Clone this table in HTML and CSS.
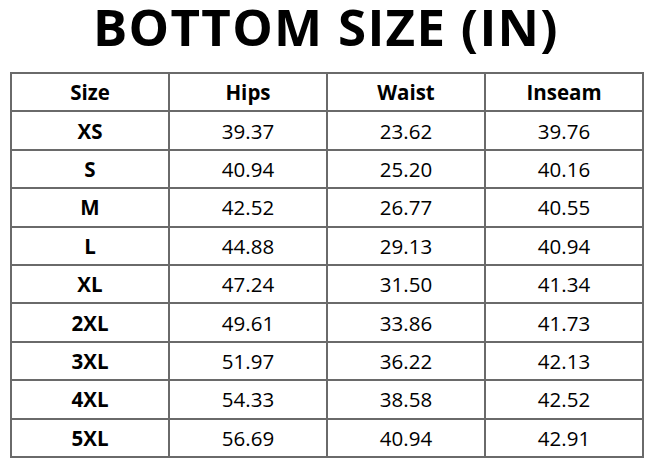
FILE: index.html
```html
<!DOCTYPE html>
<html>
<head>
<meta charset="utf-8">
<link rel="stylesheet" href="styles.css">
</head>
<body>
<h1 class="title">BOTTOM SIZE (IN)</h1>
<table class="chart">
  <thead>
    <tr><th>Size</th><th>Hips</th><th>Waist</th><th>Inseam</th></tr>
  </thead>
  <tbody>
    <tr><th>XS</th><td>39.37</td><td>23.62</td><td>39.76</td></tr>
    <tr><th>S</th><td>40.94</td><td>25.20</td><td>40.16</td></tr>
    <tr><th>M</th><td>42.52</td><td>26.77</td><td>40.55</td></tr>
    <tr><th>L</th><td>44.88</td><td>29.13</td><td>40.94</td></tr>
    <tr><th>XL</th><td>47.24</td><td>31.50</td><td>41.34</td></tr>
    <tr><th>2XL</th><td>49.61</td><td>33.86</td><td>41.73</td></tr>
    <tr><th>3XL</th><td>51.97</td><td>36.22</td><td>42.13</td></tr>
    <tr><th>4XL</th><td>54.33</td><td>38.58</td><td>42.52</td></tr>
    <tr><th>5XL</th><td>56.69</td><td>40.94</td><td>42.91</td></tr>
  </tbody>
</table>
</body>
</html>
```

FILE: styles.css
```css
html, body {
  margin: 0;
  padding: 0;
  background: #ffffff;
}
body {
  font-family: "Open Sans", "Noto Sans", sans-serif;
  color: #000;
  width: 652px;
  height: 464px;
  overflow: hidden;
}
.title {
  margin: 0;
  height: 72px;
  font-size: 51px;
  font-weight: 700;
  line-height: 52px;
  text-align: center;
  letter-spacing: 1.3px;
}
.chart {
  margin-left: 10px;
  width: 634px;
  border-collapse: collapse;
  table-layout: fixed;
  font-size: 20.5px;
}
.chart th, .chart td {
  border: 2px solid #6a6a6a;
  height: 36.4px;
  padding: 0;
  text-align: center;
  vertical-align: middle;
}
.chart th {
  font-weight: 700;
}
.chart td {
  font-weight: 400;
}
```
